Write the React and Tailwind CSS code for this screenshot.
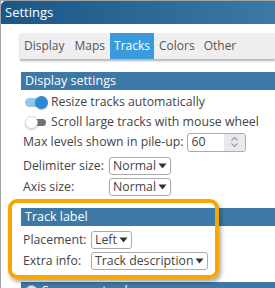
const tabs = ["Display", "Maps", "Tracks", "Colors", "Other"];

const Caret = () => (
  <svg width="9" height="6" viewBox="0 0 9 6" className="ml-[2px]">
    <path d="M0.5 0.5h8L4.5 5.5z" fill="#333" />
  </svg>
);

const Select = ({ value }) => (
  <span className="inline-flex h-[18px] items-center rounded-[3px] border border-[#aaaaaa] bg-white pl-[3px] pr-[3px] leading-none">
    {value}
    <Caret />
  </span>
);

const Toggle = ({ on }) => (
  <span className="relative inline-flex h-[14px] w-[22px] shrink-0 items-center">
    {on ? (
      <>
        <span className="h-[9px] w-full rounded-full bg-[#94c6ec]" />
        <span className="absolute right-[-1px] h-[13px] w-[13px] rounded-full bg-[#2b89d7] shadow-[0_1px_1px_rgba(0,0,0,0.25)]" />
      </>
    ) : (
      <>
        <span className="ml-[6px] h-[7px] w-[15px] rounded-r-full bg-[#727272]" />
        <span className="absolute left-0 h-[13px] w-[13px] rounded-full border border-[#d6d6d6] bg-white shadow-[0_1px_2px_rgba(0,0,0,0.2)]" />
      </>
    )}
  </span>
);

const Header = ({ children, className = "" }) => (
  <div
    className={`flex h-[18px] items-center bg-[#3d79a6] pl-[4px] text-[12.5px] text-white ${className}`}
  >
    {children}
  </div>
);

export default function App() {
  return (
    <div className="h-[288px] w-[275px] overflow-hidden border-t border-l border-[#a3a3a3] bg-white font-['Open_Sans',sans-serif] text-[12.3px] text-[#444]">
      <div className="flex h-[23px] items-center rounded-tl-[5px] bg-linear-to-r from-[#1a5787] to-[#3c79a5] pl-[4px] text-[13px] text-white">
        Settings
      </div>

      <div className="pl-[20px]">
        <div className="mt-[9px] -ml-px flex h-[26px] items-stretch bg-[#efefef] pl-[0px] text-[12px] text-[#555] shadow-[0_2px_2px_rgba(0,0,0,0.3)]">
          {tabs.map((tab) => (
            <span
              key={tab}
              className={`flex items-center px-[4px] ${
                tab === "Tracks" ? "bg-[#3a9bdc] text-white" : ""
              } ${tab === "Display" ? "mr-[2px]" : "mr-[1px]"}`}
            >
              {tab}
            </span>
          ))}
        </div>

        <Header className="mt-[13px]">Display settings</Header>

        <div className="pl-[2px]">
          <div className="mt-[2px] flex h-[20px] items-center gap-[4px] pl-[2px]">
            <Toggle on />
            <span>Resize tracks automatically</span>
          </div>
          <div className="flex h-[20px] items-center gap-[4px] pl-[2px]">
            <Toggle />
            <span>Scroll large tracks with mouse wheel</span>
          </div>
          <div className="flex h-[20px] items-center">
            <span>Max levels shown in pile-up:</span>
            <span className="ml-[3px] flex h-[19px] w-[59px] items-stretch overflow-hidden rounded-[3px] border border-[#aaaaaa]">
              <span className="flex flex-1 items-center pl-[4px]">60</span>
              <span className="flex w-[21px] flex-col items-center justify-center bg-[#e9e9ef]">
                <svg width="9" height="12" viewBox="0 0 9 12">
                  <path
                    d="M1.5 4.5l3-3 3 3M1.5 7.5l3 3 3-3"
                    fill="none"
                    stroke="#9a9a9a"
                    strokeWidth="1.1"
                  />
                </svg>
              </span>
            </span>
          </div>
          <div className="mt-[3px] grid grid-cols-[86px_auto] items-center">
            <span className="flex h-[22px] items-center">Delimiter size:</span>
            <span>
              <Select value="Normal" />
            </span>
            <span className="flex h-[20px] items-center">Axis size:</span>
            <span>
              <Select value="Normal" />
            </span>
          </div>
        </div>

        <div className="relative mt-[11px]">
          <Header>Track label</Header>
          <div className="grid grid-cols-[68px_auto] items-center pt-[4px] pl-[2px]">
            <span className="flex h-[21px] items-center">Placement:</span>
            <span>
              <Select value="Left" />
            </span>
            <span className="flex h-[21px] items-center">Extra info:</span>
            <span>
              <Select value="Track description" />
            </span>
          </div>
          <div className="pointer-events-none absolute top-[-9px] left-[-13px] h-[80px] w-[211px] rounded-[9px] border-[4px] border-[#f6a800] shadow-[2px_3px_4px_rgba(0,0,0,0.35)]" />
        </div>

        <Header className="mt-[10px] gap-[4px] pl-[1px]">
          <span className="flex h-[13px] w-[13px] items-center justify-center rounded-full border border-[#9fb7cc] bg-[#dce6ef]">
            <span className="h-[5px] w-[5px] rounded-full bg-[#6d8fae]" />
          </span>
          Sequence track
        </Header>
      </div>
    </div>
  );
}
